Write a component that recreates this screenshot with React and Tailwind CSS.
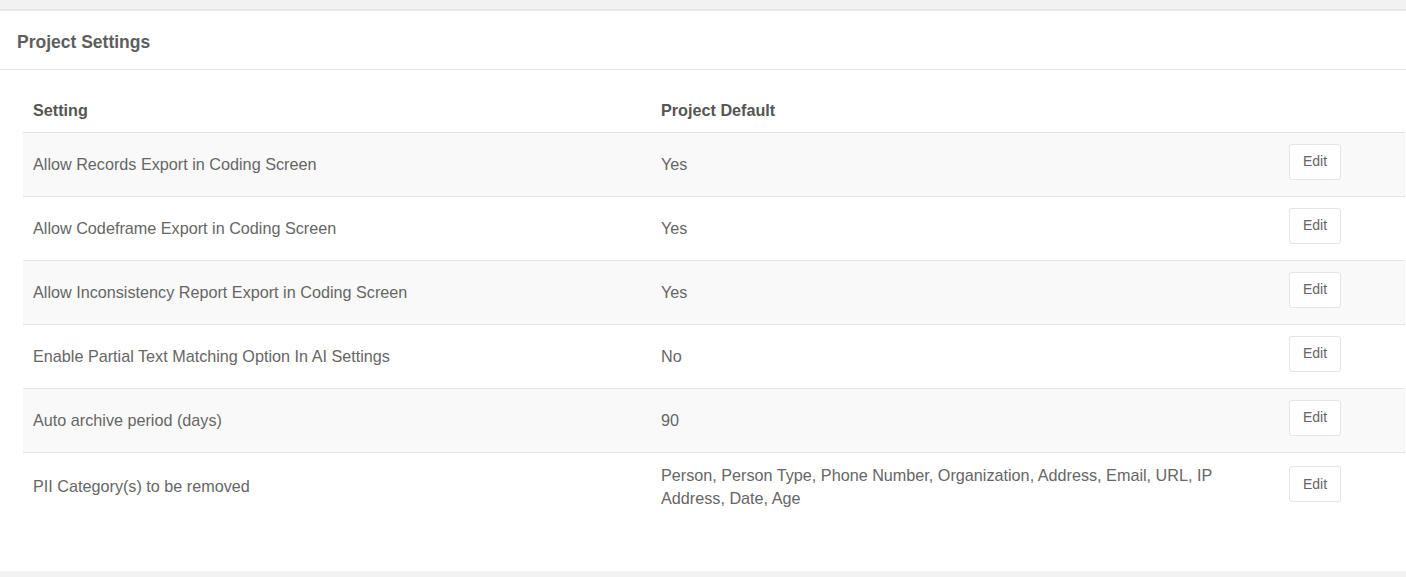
import React from "react";

const ROWS = [
  { name: "Allow Records Export in Coding Screen", value: "Yes" },
  { name: "Allow Codeframe Export in Coding Screen", value: "Yes" },
  { name: "Allow Inconsistency Report Export in Coding Screen", value: "Yes" },
  { name: "Enable Partial Text Matching Option In AI Settings", value: "No" },
  { name: "Auto archive period (days)", value: "90" },
  {
    name: "PII Category(s) to be removed",
    value: "Person, Person Type, Phone Number, Organization, Address, Email, URL, IP Address, Date, Age",
  },
];

export default function App() {
  return (
    <div className="w-[1406px] h-[577px] bg-[#f2f2f2] pt-[9px] overflow-hidden font-['Liberation_Sans',Arial,sans-serif] text-[#666]">
      <div className="bg-white border-t-2 border-[#e8e8e8] h-[562px]">
        <div className="h-[59px] pt-[4px] border-b border-[#e6e6e6] px-[17px] flex items-center">
          <h2 className="text-[17.5px] font-bold text-[#5e5e5e]">Project Settings</h2>
        </div>

        <div className="pl-[23px] pr-px pt-[20px]">
          <table className="w-full border-collapse text-[16.2px]">
            <thead>
              <tr className="border-b border-[#e2e2e2]">
                <th className="w-[628px] h-[42px] px-[10px] pb-[1px] text-left font-bold text-[#555] align-middle">Setting</th>
                <th className="w-[628px] px-[10px] pb-[1px] text-left font-bold text-[#555] align-middle">Project Default</th>
                <th className="px-[10px]"></th>
              </tr>
            </thead>
            <tbody>
              {ROWS.map((row, i) => (
                <tr
                  key={i}
                  className={`${i % 2 === 0 ? "bg-[#f9f9f9]" : "bg-white"} ${i < ROWS.length - 1 ? "border-b border-[#e6e6e6]" : ""}`}
                >
                  <td className="h-[63px] px-[10px] py-[11px] align-middle leading-[23px]">{row.name}</td>
                  <td className="px-[10px] py-[11px] pr-[50px] align-middle leading-[23px]">{row.value}</td>
                  <td className="px-[10px] py-[11px] align-middle">
                    <button className="block mb-[5px] h-[36px] w-[52px] bg-white border border-[#e5e5e5] rounded-[3px] text-[14px] text-[#666]">
                      Edit
                    </button>
                  </td>
                </tr>
              ))}
            </tbody>
          </table>
        </div>
      </div>
    </div>
  );
}
